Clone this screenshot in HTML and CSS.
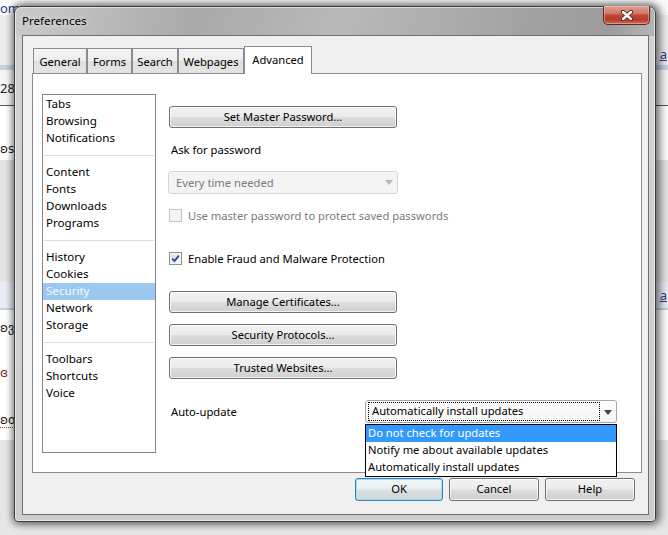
FILE: index.html
```html
<!DOCTYPE html>
<html>
<head>
<meta charset="utf-8">
<title>Preferences</title>
<link rel="stylesheet" href="styles.css">
</head>
<body>
<div class="page">
  <div class="band band-a"><span class="link">om</span><span></span></div>
  <div class="band band-b"><span></span><span class="link ul">a</span></div>
  <div class="band band-c"></div>
  <div class="band band-d"><span class="bgtext">28</span><span></span></div>
  <div class="band band-e"><span class="bgtext glyph">ʚs</span><span></span></div>
  <div class="band band-f"></div>
  <div class="band band-g"><span></span><span class="link ul">a</span></div>
  <div class="band band-h"><span class="bgtext glyph">ʚვ</span><span></span></div>
  <div class="band band-i"><span class="bgtext glyph red">ɞ</span><span></span></div>
  <div class="band band-k"><span class="bgtext glyph dotted">ʚo</span><span></span></div>
  <div class="band band-j"></div>
</div>

<div class="window">
  <div class="titlebar">
    <span class="title">Preferences</span>
    <div class="close">
      <svg width="14" height="11" viewBox="0 0 14 11">
        <path d="M3 2 L11 9 M11 2 L3 9" stroke="#5a2018" stroke-width="4.2" stroke-linecap="round"/>
        <path d="M3 2 L11 9 M11 2 L3 9" stroke="#ffffff" stroke-width="2.4" stroke-linecap="round"/>
      </svg>
    </div>
  </div>
  <div class="client">
    <div class="tabs">
      <div class="tab w-general">General</div>
      <div class="tab w-forms">Forms</div>
      <div class="tab w-search">Search</div>
      <div class="tab w-web">Webpages</div>
      <div class="tab tab-active w-adv">Advanced</div>
    </div>
    <div class="panel">
      <ul class="list">
        <li>Tabs</li>
        <li>Browsing</li>
        <li>Notifications</li>
        <li class="sep"></li>
        <li>Content</li>
        <li>Fonts</li>
        <li>Downloads</li>
        <li>Programs</li>
        <li class="sep"></li>
        <li>History</li>
        <li>Cookies</li>
        <li class="sel">Security</li>
        <li>Network</li>
        <li>Storage</li>
        <li class="sep"></li>
        <li>Toolbars</li>
        <li>Shortcuts</li>
        <li>Voice</li>
      </ul>
      <div class="settings">
        <div class="btn wide m-first">Set Master Password...</div>
        <div class="label m-ask">Ask for password</div>
        <div class="select disabled m-sel">
          <span class="sel-text">Every time needed</span>
          <span class="arrow"></span>
        </div>
        <div class="check-row disabled m-c1">
          <span class="box"></span>
          <span>Use master password to protect saved passwords</span>
        </div>
        <div class="check-row m-c2">
          <span class="box">
            <svg width="11" height="11" viewBox="0 0 11 11"><path d="M2.2 5.6 L4.5 8 L8.8 2.6" fill="none" stroke="#2f4d92" stroke-width="1.9"/></svg>
          </span>
          <span>Enable Fraud and Malware Protection</span>
        </div>
        <div class="btn wide m-cert">Manage Certificates...</div>
        <div class="btn wide m-btn">Security Protocols...</div>
        <div class="btn wide m-btn">Trusted Websites...</div>
        <div class="auto-row">
          <span class="label auto-label">Auto-update</span>
          <div class="select auto">
            <span class="sel-text focus">Automatically install updates</span>
            <span class="arrow"></span>
            <ul class="dropdown">
              <li class="hl">Do not check for updates</li>
              <li>Notify me about available updates</li>
              <li>Automatically install updates</li>
            </ul>
          </div>
        </div>
      </div>
    </div>
    <div class="footer">
      <div class="btn ok">OK</div>
      <div class="btn foot">Cancel</div>
      <div class="btn foot">Help</div>
    </div>
  </div>
</div>
</body>
</html>
```

FILE: styles.css
```css
* { box-sizing: border-box; }

html, body {
  margin: 0;
  padding: 0;
}

body {
  width: 668px;
  height: 535px;
  overflow: hidden;
  position: relative;
  background: #e8e8e8;
  font-family: "Noto Sans", "Open Sans", sans-serif;
  font-size: 11.2px;
  color: #000;
}

/* ---------- background page ---------- */
.page {
  display: flex;
  flex-direction: column;
  width: 668px;
  height: 535px;
}

.band {
  display: flex;
  justify-content: space-between;
  align-items: center;
  padding: 0 1px 0 0;
  font-size: 13px;
}

.band-a { height: 15px; background: #fbfbfb; }
.band-b { height: 50px; background: #ececec; align-items: flex-end; padding-bottom: 2px; }
.band-c { height: 5px; background: #c5cfe1; }
.band-d { height: 36px; background: #f5f5f5; border-bottom: 1px solid #555; }
.band-e { height: 54px; background: #fff; align-items: flex-end; padding-bottom: 4px; }
.band-f { height: 122px; background: #e3e3e3; }
.band-g { height: 28px; background: #e9ecf2; border-bottom: 2px solid #c5cfe1; }
.band-h { height: 35px; background: #fff; }
.band-i { height: 55px; background: #fff; }
.band-k { height: 40px; background: #fff; }
.band-j { flex: 1; background: #e6e6e6; }

.link { color: #2c3c94; }
.ul { text-decoration: underline; }
.bgtext { color: #222; }
.glyph { font-family: "DejaVu Sans", sans-serif; font-size: 12px; }
.red { color: #7a2a2a; }
.dotted { border-bottom: 1px dotted #c33; }

/* ---------- window ---------- */
.window {
  position: absolute;
  left: 14px;
  top: 6px;
  width: 642px;
  height: 516px;
  border: 1px solid #3e3e3e;
  border-radius: 7px 7px 4px 4px;
  background:
    linear-gradient(180deg, rgba(0,0,0,0) 0, rgba(0,0,0,0) 29px, #d2d2d2 29px, #cdcdcd 100%),
    linear-gradient(100deg, #cacaca 0%, #a9a9a9 25%, #b9b9b9 45%, #a2a2a2 70%, #9c9c9c 82%, #c4c4c4 92%, #b2b2b2 100%);
  box-shadow: 0 0 7px 2px rgba(0,0,0,0.45), 4px 0 8px 2px rgba(0,0,0,0.25), inset 0 0 0 1px rgba(255,255,255,0.55);
  padding: 0 6px 6px 7px;
  display: flex;
  flex-direction: column;
}

.titlebar {
  height: 28px;
  position: relative;
  display: flex;
  align-items: center;
  padding-bottom: 1px;
}

.title {
  font-size: 11.6px;
  color: #000;
  text-shadow: 0 0 6px rgba(255,255,255,0.8);
}

.close {
  position: absolute;
  top: -1px;
  right: -1px;
  width: 47px;
  height: 19px;
  border: 1px solid #5b2a22;
  border-top: none;
  border-radius: 0 0 5px 5px;
  background: linear-gradient(180deg, #e0a090 0%, #cf7a66 40%, #c0483a 52%, #b43c2c 75%, #cd6a55 100%);
  box-shadow: inset 0 0 0 1px rgba(255,210,200,0.45);
  display: flex;
  align-items: center;
  justify-content: center;
}

.client {
  flex: 1;
  background: #f0f0f0;
  border: 1px solid #6f6f6f;
  padding: 10px 13px 0 9px;
  display: flex;
  flex-direction: column;
}

/* ---------- tabs ---------- */
.tabs {
  display: flex;
  align-items: flex-end;
  height: 27px;
  padding-left: 1px;
  position: relative;
  z-index: 2;
}

.tab {
  height: 25px;
  border: 1px solid #898c95;
  border-bottom: none;
  background: linear-gradient(180deg, #f4f4f4 0%, #ececec 50%, #dfdfdf 51%, #e4e4e4 100%);
  text-align: center;
  line-height: 23px;
  padding-top: 1px;
  color: #000;
}

.tab-active {
  height: 28px;
  margin-bottom: -1px;
  background: #fff;
  line-height: 24px;
  padding-top: 1px;
}

.w-general { width: 54px; }
.w-forms { width: 45px; }
.w-search { width: 46px; }
.w-web { width: 66px; }
.w-adv { width: 68px; }

/* ---------- panel ---------- */
.panel {
  width: 610px;
  height: 400px;
  background: #fff;
  border: 1px solid #898c95;
  padding: 20px 0 0 9px;
  display: flex;
  align-items: flex-start;
  position: relative;
  z-index: 1;
}

.list {
  list-style: none;
  margin: 0;
  width: 114px;
  height: 359px;
  border: 1px solid #828790;
  padding: 1px 0;
  font-size: 11.6px;
}

.list li {
  height: 17px;
  line-height: 16px;
  padding-left: 3px;
  white-space: nowrap;
}

.list li.sep {
  position: relative;
  padding: 0;
}

.list li.sep::after {
  content: "";
  position: absolute;
  left: 1px;
  right: 1px;
  top: 8px;
  height: 1px;
  background: #dcdcdc;
}

.list li.sel {
  background: #9bc8ef;
  color: #f4f9ff;
}

.settings {
  margin-left: 13px;
  width: 460px;
  display: flex;
  flex-direction: column;
  align-items: flex-start;
}

.btn {
  height: 22px;
  border: 1px solid #707070;
  border-radius: 3px;
  background: linear-gradient(180deg, #f2f2f2 0%, #ebebeb 48%, #dddddd 52%, #cfcfcf 100%);
  box-shadow: inset 0 0 0 1px rgba(255,255,255,0.75);
  text-align: center;
  line-height: 19px;
  color: #000;
}

.wide { width: 228px; }

.m-first { margin-top: 12px; }
.m-cert { margin-top: 25px; }
.m-btn { margin-top: 11px; }

.label {
  height: 16px;
  line-height: 15px;
  padding-left: 2px;
}

.m-ask { margin-top: 14px; }

.select {
  position: relative;
  height: 23px;
  border: 1px solid #acacac;
  border-radius: 3px;
  display: flex;
  align-items: center;
}

.select.disabled {
  width: 230px;
  margin-left: -1px;
  background: #f4f4f4;
  border-color: #d5d5d5;
  color: #7a7a7a;
}

.m-sel { margin-top: 13px; }

.sel-text {
  flex: 1;
  padding-left: 7px;
  line-height: 16px;
}

.arrow {
  width: 16px;
  height: 100%;
  position: relative;
}

.arrow::after {
  content: "";
  position: absolute;
  left: 4px;
  top: 8px;
  border-left: 4px solid transparent;
  border-right: 4px solid transparent;
  border-top: 5px solid #444;
}

.select.disabled .arrow::after { border-top-color: #b8b8b8; }

.check-row {
  display: flex;
  align-items: center;
  height: 16px;
  gap: 6px;
}

.check-row .box {
  width: 13px;
  height: 13px;
  border: 1px solid #8e8f8f;
  background: linear-gradient(135deg, #dcdcdc 0%, #fefefe 100%);
  box-shadow: inset 0 0 0 1px #f4f4f4;
  display: flex;
  align-items: center;
  justify-content: center;
}

.check-row.disabled { color: #7a7a7a; }
.check-row.disabled .box {
  border-color: #c4c4c4;
  background: #f4f4f4;
  box-shadow: none;
}

.m-c1 { margin-top: 13px; }
.m-c2 { margin-top: 27px; }

.auto-row {
  margin-top: 21px;
  display: flex;
  align-items: center;
}

.auto-label { width: 196px; }

.select.auto {
  width: 252px;
  background: linear-gradient(180deg, #fefefe 0%, #f4f4f4 100%);
  border-color: #a6a6a6;
  padding: 1px 0 1px 2px;
}

.sel-text.focus {
  height: 19px;
  border: 1px dotted #000;
  padding-left: 3px;
  line-height: 16px;
}

.dropdown {
  position: absolute;
  left: -1px;
  top: 23px;
  width: 252px;
  height: 53px;
  margin: 0;
  padding: 0;
  list-style: none;
  background: #fff;
  border: 1px solid #000;
  z-index: 5;
}

.dropdown li {
  height: 17px;
  line-height: 16px;
  padding-left: 2px;
}

.dropdown li.hl {
  background: #3399ff;
  color: #fff;
}

/* ---------- footer ---------- */
.footer {
  margin-top: 5px;
  display: flex;
  justify-content: flex-end;
  gap: 6px;
}

.footer .btn {
  height: 23px;
  line-height: 20px;
}

.ok {
  width: 88px;
  border-color: #3c7fb1;
  box-shadow: inset 0 0 0 1px #9fdcf7;
  background: linear-gradient(180deg, #f2f6f8 0%, #e9eef1 48%, #d9e0e4 52%, #cdd6db 100%);
}

.foot { width: 90px; }
```
